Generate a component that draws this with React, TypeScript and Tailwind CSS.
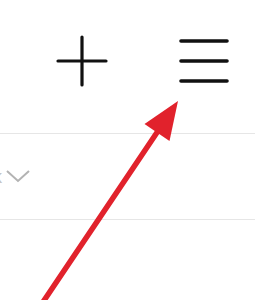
import React from "react";

function PlusIcon() {
  return (
    <svg width="52" height="52" viewBox="0 0 52 52" className="shrink-0">
      <path d="M26 2v48M2 26h48" stroke="#111" strokeWidth="3.2" strokeLinecap="round" fill="none" />
    </svg>
  );
}

function MenuIcon() {
  return (
    <svg width="52" height="52" viewBox="0 0 52 52" className="shrink-0">
      <path d="M3 6h46M3 26h46M3 46h46" stroke="#111" strokeWidth="3.6" strokeLinecap="round" fill="none" />
    </svg>
  );
}

export default function App() {
  return (
    <div className="relative w-[255px] h-[300px] overflow-hidden bg-white" style={{ fontFamily: "'Liberation Sans', Arial, sans-serif" }}>
      <div className="flex h-[133px] items-start justify-end gap-[70px] pt-[35px] pr-[25px]">
        <PlusIcon />
        <MenuIcon />
      </div>
      <div className="flex h-[87px] items-center gap-[3px] border-y border-[#e6e6e6]">
        <span className="ml-[-7px] text-[18px] leading-none text-[#c4c4c4]">k</span>
        <svg width="26" height="15" viewBox="0 0 26 15" className="shrink-0">
          <path d="M2 2l11 10L24 2" stroke="#b3b3b3" strokeWidth="2" fill="none" />
        </svg>
      </div>
      <svg className="pointer-events-none absolute inset-0" width="255" height="300" viewBox="0 0 255 300">
        <path d="M43 302L160 128" stroke="#e1222c" strokeWidth="5.5" strokeLinecap="round" fill="none" />
        <path d="M178 101L144.5 124L169.5 141Z" fill="#e1222c" />
      </svg>
    </div>
  );
}
